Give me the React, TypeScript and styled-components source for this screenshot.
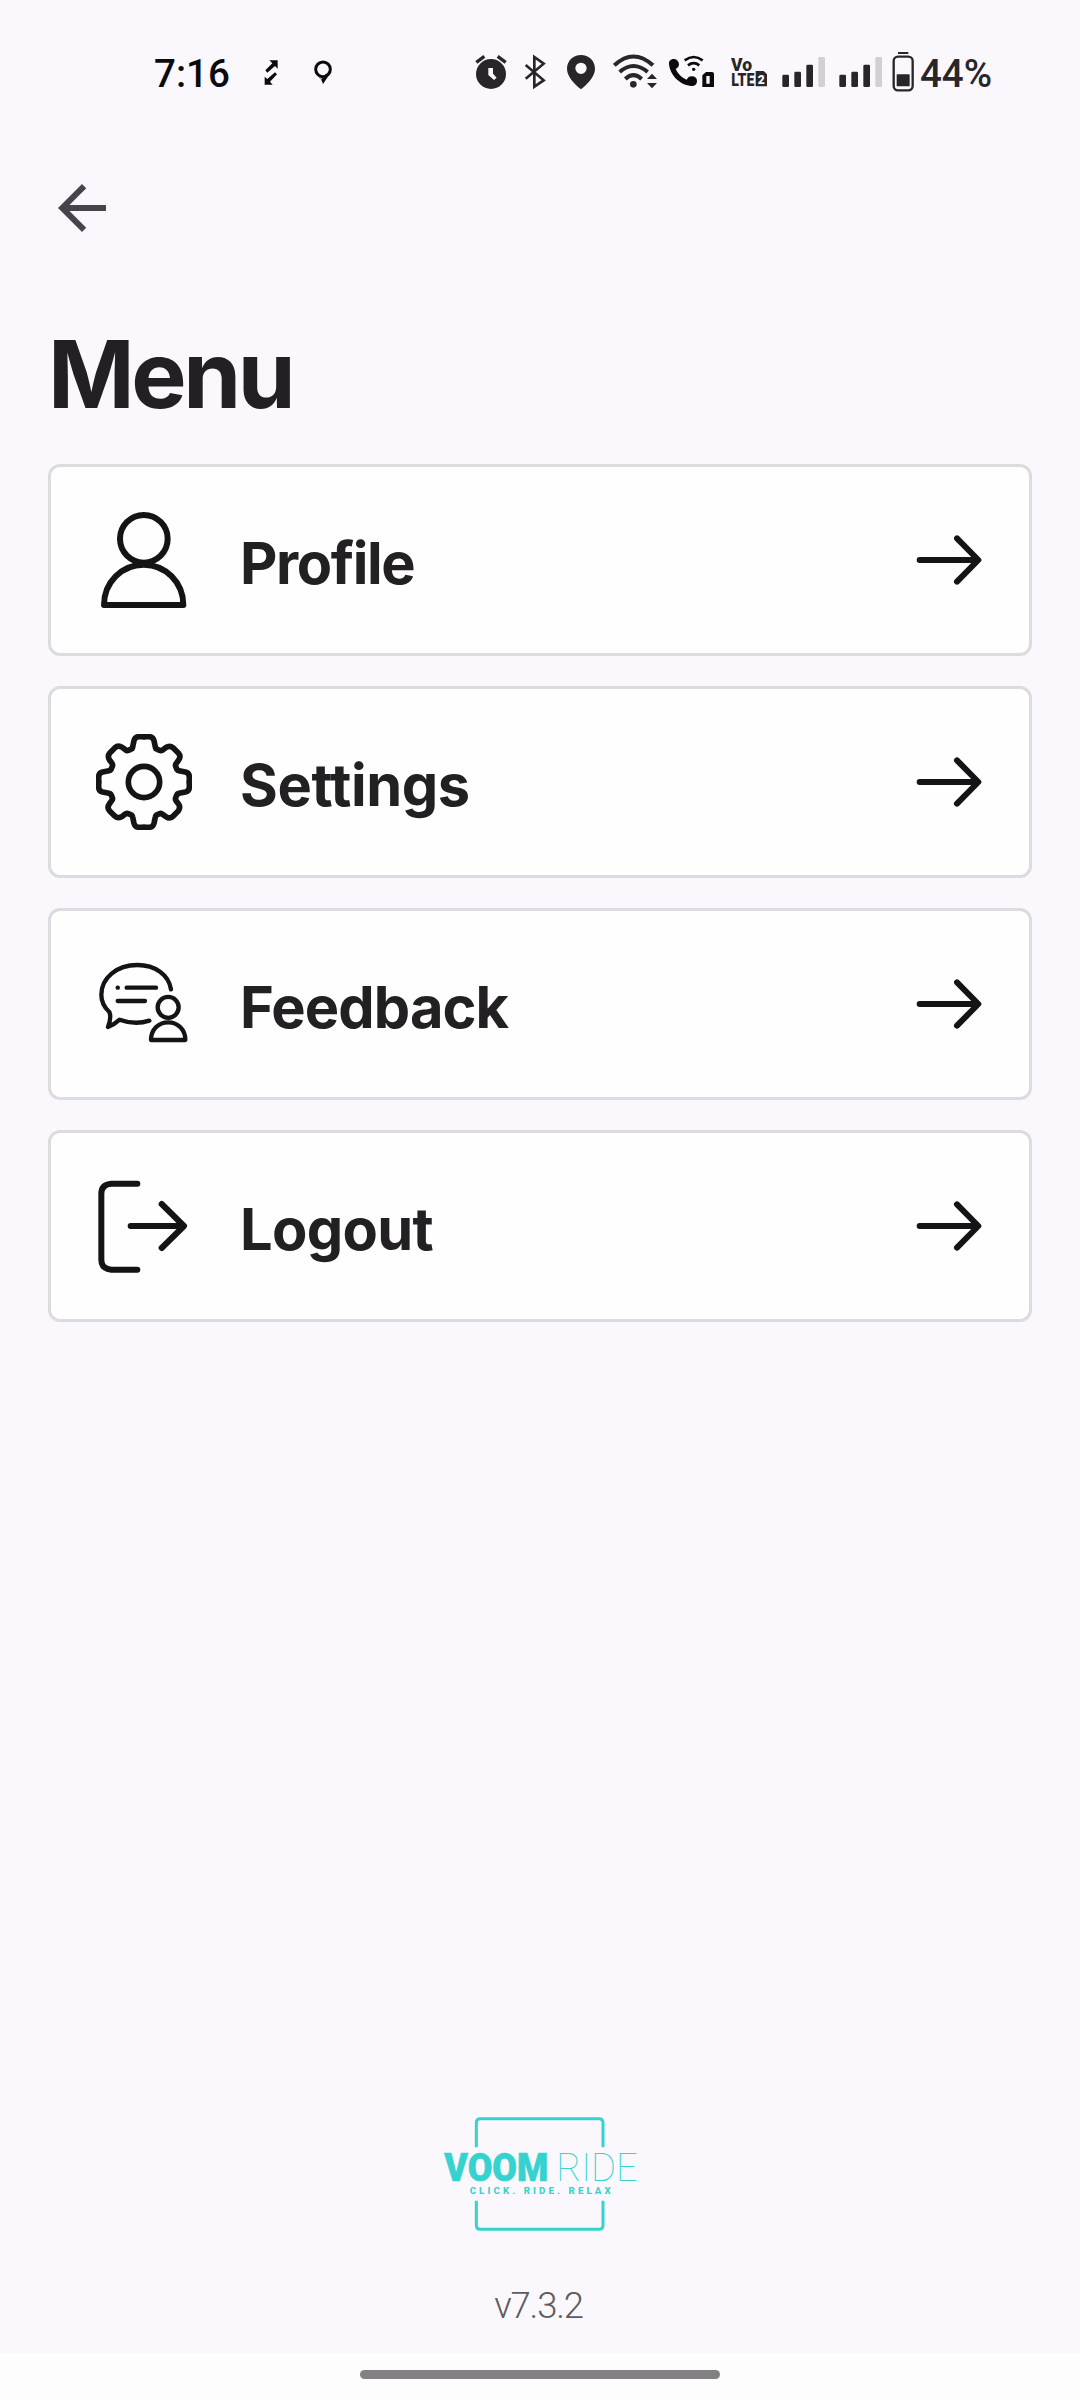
import React from "react";
import styled, { createGlobalStyle } from "styled-components";

const INK = "#29262a";
const ICON_INK = "#141316";
const TEAL = "#35d2d0";

const GlobalStyle = createGlobalStyle`
  *, *::before, *::after { box-sizing: border-box; }
  body { margin: 0; background: #faf8fc; }
`;

const Screen = styled.div`
  display: flex;
  flex-direction: column;
  width: 1080px;
  height: 2400px;
  background: #faf8fc;
  color: #232024;
  font-family: Inter, "Liberation Sans", sans-serif;
  overflow: hidden;
`;

const StatusBar = styled.header`
  display: flex;
  align-items: center;
  justify-content: space-between;
  height: 140px;
  padding: 0 88px 0 154px;
  font-family: Roboto, sans-serif;
`;

const StatusGroup = styled.div`
  display: flex;
  align-items: center;
`;

const StatusText = styled.span<{ $color: string; $weight: number; $gap?: number }>`
  margin-left: ${(p) => p.$gap ?? 0}px;
  padding-top: 7px;
  font-size: 38.5px;
  line-height: 44px;
  font-weight: ${(p) => p.$weight};
  color: ${(p) => p.$color};
`;

const StatusIcon = styled.svg<{ $gap: number }>`
  display: block;
  flex: none;
  height: 44px;
  margin-left: ${(p) => p.$gap}px;
`;

const AppBar = styled.nav`
  display: flex;
  align-items: center;
  height: 136px;
  padding-left: 46px;
`;

const BackButton = styled.button`
  display: flex;
  padding: 0;
  border: 0;
  background: none;
  color: #47444b;
`;

const Main = styled.main`
  display: flex;
  flex: 1;
  flex-direction: column;
  padding: 42px 48px 0;
`;

const Title = styled.h1`
  margin: 0 0 34px;
  font-size: 93px;
  line-height: 112px;
  font-weight: 700;
  letter-spacing: -3.4px;
`;

const MenuList = styled.div`
  display: flex;
  flex-direction: column;
  gap: 30px;
`;

const MenuCard = styled.button`
  display: flex;
  align-items: center;
  gap: 48px;
  height: 192px;
  padding: 0 47px 0 45px;
  border: 3px solid #dddbdf;
  border-radius: 12px;
  background: #fefefe;
  color: inherit;
  font: inherit;
  text-align: left;
`;

const MenuLabel = styled.span<{ $tracking: number }>`
  flex: 1;
  padding-top: 6px;
  font-size: 57.75px;
  line-height: 70px;
  font-weight: 700;
  letter-spacing: ${(p) => p.$tracking}px;
`;

const LineIcon = styled.svg<{ $size: number }>`
  display: block;
  flex: none;
  width: ${(p) => p.$size}px;
  height: ${(p) => p.$size}px;
  fill: none;
  stroke: ${ICON_INK};
  stroke-linecap: round;
  stroke-linejoin: round;
`;

const Footer = styled.footer`
  display: flex;
  flex-direction: column;
  align-items: center;
  height: 237px;
`;

const Version = styled.p`
  margin: 52px 0 0;
  padding-right: 3px;
  font-family: Roboto, sans-serif;
  font-size: 36.5px;
  line-height: 44px;
  font-weight: 300;
  letter-spacing: -1.2px;
  color: #5e5c60;
`;

const NavigationBar = styled.div`
  display: flex;
  justify-content: center;
  height: 47px;
  padding-top: 17px;
  background: #fefdfe;
`;

const Handle = styled.div`
  width: 360px;
  height: 9px;
  border-radius: 5px;
  background: #838083;
`;

const Signal = ({ gap }: { gap: number }) => (
  <StatusIcon $gap={gap} width="44" viewBox="186 24 132 132" fill={INK}>
    <rect x="187" y="104" width="20" height="37" rx="4" />
    <rect x="223" y="95" width="20" height="46" rx="4" />
    <rect x="259" y="74" width="20" height="67" rx="4" />
    <rect x="295" y="51" width="20" height="90" rx="4" fill="#d2d0d3" />
  </StatusIcon>
);

const ProfileIcon = () => (
  <LineIcon $size={96} viewBox="168 171 288 288" strokeWidth="18">
    <circle cx="311.500" cy="251.500" r="71.500" />
    <path d="M192 450C192 382 245 329 311 329S430 382 430 450Z" />
  </LineIcon>
);

const GEAR_QUARTER =
  "M0-136H15Q27-136 30-124L34-105Q35-99 40-98L47-95Q51-93 56-96L65-103Q77-111 88-102L103-87Q112-77 104-66L97-56Q93-51 95-47L98-40Q99-35 105-34L124-30Q136-27 136-15V0";

const SettingsIcon = () => (
  <LineIcon $size={96} viewBox="-144 -144 288 288" strokeWidth="17">
    <circle r="47" />
    {[0, 90, 180, 270].map((angle) => (
      <path key={angle} d={GEAR_QUARTER} transform={`rotate(${angle})`} />
    ))}
  </LineIcon>
);

const FeedbackIcon = () => (
  <LineIcon $size={96} viewBox="168 168 288 288" strokeWidth="13">
    <path d="M393 268C386 225 346 195 292 195C230 195 184 234 184 284C184 306 194 323 208 336C213 347 210 365 204 381C218 376 228 369 239 359C269 370 300 371 328 362" />
    <path d="M260 263H348M233 263H233.500M233 303H315" />
    <circle cx="384.500" cy="322" r="31.500" />
    <path d="M333 420C333 389 355 367 384.500 367S436 389 436 420Z" />
  </LineIcon>
);

const LogoutIcon = () => (
  <LineIcon $size={96} viewBox="168 174 288 288" strokeWidth="18">
    <path d="M292 191H214Q184 193 184 221V420Q184 446 214 449H292" />
    <path d="M272 318H431M365 252L432 318L365 384" />
  </LineIcon>
);

const ArrowIcon = () => (
  <LineIcon $size={66} viewBox="108 216 198 198" strokeWidth="18">
    <path d="M119 315H294M231 250L295 315L231 380" />
  </LineIcon>
);

const ITEMS = [
  { label: "Profile", Icon: ProfileIcon, tracking: -1.4 },
  { label: "Settings", Icon: SettingsIcon, tracking: -0.4 },
  { label: "Feedback", Icon: FeedbackIcon, tracking: -0.9 },
  { label: "Logout", Icon: LogoutIcon, tracking: -0.7 },
];

const BrandLogo = () => (
  <svg width="200" height="116" viewBox="60 78 600 348" role="img" aria-label="Voom Ride">
    <path
      d="M169 172V98Q169 86 181 86H537Q549 86 549 98V172M169 332V406Q169 418 181 418H537Q549 418 549 406V332"
      fill="none"
      stroke={TEAL}
      strokeWidth="9"
    />
    <g fill={TEAL} fontFamily="Roboto, sans-serif">
      <text
        x="73"
        y="273"
        fontSize="114"
        fontWeight="900"
        textLength="312"
        lengthAdjust="spacingAndGlyphs"
        stroke={TEAL}
        strokeWidth="2"
      >
        VOOM
      </text>
      <text x="409" y="273" fontSize="114" fontWeight="100" textLength="244" lengthAdjust="spacingAndGlyphs">
        RIDE
      </text>
      <text x="149" y="312" fontSize="29" fontWeight="800" textLength="423">
        CLICK. RIDE. RELAX
      </text>
    </g>
  </svg>
);

export default function App() {
  return (
    <>
      <GlobalStyle />
      <Screen>
        <StatusBar>
          <StatusGroup>
            <StatusText $weight={500} $color="#0b0a0c">
              7:16
            </StatusText>
            <StatusIcon $gap={34} width="14" viewBox="372 24 42 132" fill="#0b0a0c">
              <path d="M388 61H413V86L405 78L382 98L376 91L397 70ZM374 110L382 117L405 97L411 103L390 125L398 134H374Z" />
            </StatusIcon>
            <StatusIcon $gap={35} width="20" viewBox="518 24 60 132">
              <path d="M532 108L549 110L545 124Z" fill="#aaa8ac" />
              <circle cx="548" cy="88" r="22" fill="none" stroke="#0b0a0c" strokeWidth="9" />
              <path d="M573 95L548 132L543 119L556 102Z" fill="#0b0a0c" />
            </StatusIcon>
          </StatusGroup>
          <StatusGroup>
            <StatusIcon $gap={0} width="32" viewBox="45 24 96 132">
              <circle cx="93" cy="102" r="45" fill={INK} />
              <path d="M49 67L73 49M137 67L113 49" stroke={INK} strokeWidth="10" />
              <path d="M85 84H99V101L110 113L102 120L85 105Z" fill="#faf8fc" />
            </StatusIcon>
            <StatusIcon $gap={17} width="23" viewBox="192 24 69 132" fill="none" stroke={INK} strokeWidth="8">
              <path d="M197 75L251 121L223 140V51L251 71L197 116" />
            </StatusIcon>
            <StatusIcon $gap={20} width="28" viewBox="321 24 84 132" fill={INK}>
              <path
                fillRule="evenodd"
                d="M363 45C340 45 321 62 321 86C321 110 343 131 363 148C383 131 405 110 405 86C405 62 386 45 363 45ZM363 68A17 17 0 1 1 363 102A17 17 0 1 1 363 68Z"
              />
            </StatusIcon>
            <StatusIcon $gap={18} width="45" viewBox="459 24 135 132" fill="none" stroke={INK} strokeWidth="12">
              <path d="M463 76Q520 23 579 76M479 96Q520 60 563 96M496 117Q520 94 545 117" />
              <circle cx="520" cy="133" r="10" fill={INK} stroke="none" />
              <path d="M561 117L576 101L591 117ZM561 129H591L576 145Z" fill={INK} stroke="none" />
            </StatusIcon>
            <StatusIcon $gap={10} width="47" viewBox="624 24 141 132" fill="#0b0a0c">
              <path d="M641 57C631 57 626 64 627 73C631 108 661 136 695 138C705 138 711 132 711 123C711 115 706 110 698 109C689 108 684 111 680 119C664 112 653 101 647 87C654 84 657 79 657 72C656 63 650 57 641 57Z" />
              <path d="M674 61Q701 41 728 61M684 76Q701 63 718 76" fill="none" stroke="#0b0a0c" strokeWidth="8" />
              <circle cx="701" cy="88" r="5" />
              <path fillRule="evenodd" d="M727 106L738 96H756Q762 96 762 102V141H727ZM739 108V131H749V108Z" />
            </StatusIcon>
            <StatusIcon $gap={16} width="37" viewBox="33 24 111 132" fill={INK} fontFamily="Roboto, sans-serif" fontWeight="900">
              <text x="33" y="92" fontSize="56" textLength="63" lengthAdjust="spacingAndGlyphs">
                Vo
              </text>
              <text x="34" y="139" fontSize="55" textLength="69" lengthAdjust="spacingAndGlyphs">
                LTE
              </text>
              <path d="M107 93H131L141 103V139H107Z" />
              <text x="113" y="131" fontSize="39" textLength="21" lengthAdjust="spacingAndGlyphs" fill="#faf8fc">
                2
              </text>
            </StatusIcon>
            <Signal gap={14} />
            <Signal gap={13} />
            <StatusIcon $gap={9} width="22" viewBox="517 24 66 132">
              <path d="M535 39H566" stroke={INK} strokeWidth="6" />
              <rect x="522" y="50" width="57" height="101" rx="13" fill="none" stroke={INK} strokeWidth="7" />
              <rect x="531" y="103" width="39" height="36" rx="2" fill={INK} />
            </StatusIcon>
            <StatusText $weight={500} $color={INK} $gap={6}>
              44%
            </StatusText>
          </StatusGroup>
        </StatusBar>
        <AppBar>
          <BackButton aria-label="Back">
            <svg width="72" height="72" viewBox="0 0 24 24" fill="currentColor">
              <path d="M20 11H7.830l5.590-5.590L12 4l-8 8 8 8 1.410-1.410L7.830 13H20z" />
            </svg>
          </BackButton>
        </AppBar>
        <Main>
          <Title>Menu</Title>
          <MenuList>
            {ITEMS.map(({ label, Icon, tracking }) => (
              <MenuCard key={label}>
                <Icon />
                <MenuLabel $tracking={tracking}>{label}</MenuLabel>
                <ArrowIcon />
              </MenuCard>
            ))}
          </MenuList>
        </Main>
        <Footer>
          <BrandLogo />
          <Version>v7.3.2</Version>
        </Footer>
        <NavigationBar>
          <Handle />
        </NavigationBar>
      </Screen>
    </>
  );
}
